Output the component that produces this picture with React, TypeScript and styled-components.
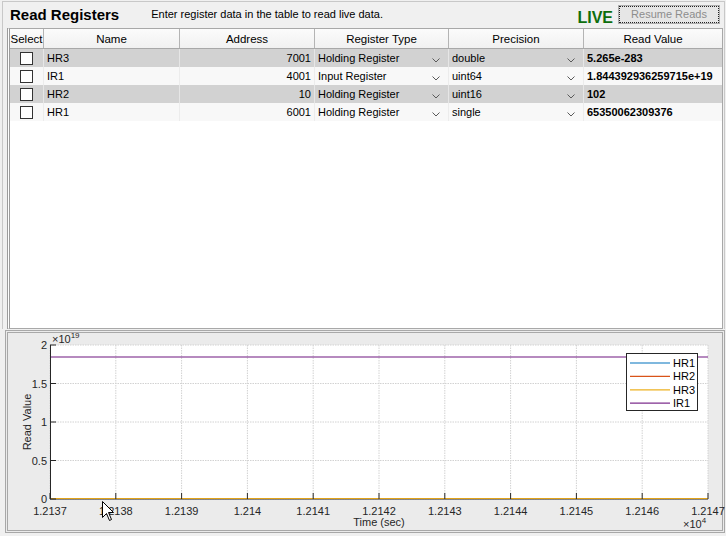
import styled, { createGlobalStyle } from 'styled-components';

const GlobalStyle = createGlobalStyle`
	body {
		margin: 0;
		background: #f0f0f0;
		font-family: "Liberation Sans", Arial, sans-serif;
	}
`;

const Page = styled.div`
	width: 726px;
	height: 536px;
	box-sizing: border-box;
	padding: 1px 1px 3px 2px;
	display: flex;
	flex-direction: column;
	gap: 1px;
`;

const TopPanel = styled.div`
	flex: 0 0 328px;
	box-sizing: border-box;
	border: 1px solid #c8c8c8;
	border-bottom: none;
	display: flex;
	flex-direction: column;
`;

const Header = styled.div`
	height: 26px;
	display: flex;
	align-items: center;
	padding-left: 7px;
	padding-right: 4px;
`;

const Title = styled.div`
	font-size: 15px;
	font-weight: 700;
	color: #000;
	margin-top: -1px;
`;

const Subtitle = styled.div`
	font-size: 11px;
	color: #000;
	margin-left: 32px;
	margin-top: -2px;
`;

const Spacer = styled.div`
	flex: 1;
`;

const Live = styled.div`
	font-size: 16px;
	font-weight: 700;
	color: #0d6e0d;
	align-self: flex-end;
	margin-bottom: 1px;
	margin-right: 5px;
`;

const ResumeButton = styled.button`
	box-sizing: border-box;
	width: 102px;
	height: 19px;
	margin-top: -1px;
	padding: 0;
	display: flex;
	align-items: center;
	justify-content: center;
	font-family: inherit;
	font-size: 11px;
	line-height: 13px;
	color: #8d8d8d;
	background: #e6e6e6;
	border: 1px solid #adadad;
	outline: 1px dotted #222;
	outline-offset: -2px;
`;

const TableFrame = styled.div`
	flex: 1;
	margin: 0 1px 0 4px;
	background: #fff;
	border-left: 3px double #9c9c9c;
	border-top: 1px solid #a8a8a8;
	border-right: 1px solid #a8a8a8;
	border-bottom: 1px solid #a8a8a8;
`;

const columns = '34px 136px 135px 134px 135px 1fr';

const HeadRow = styled.div`
	display: grid;
	grid-template-columns: ${columns};
	height: 19px;
	border-bottom: 1px solid #a8a8a8;
	background: linear-gradient(#fbfbfb, #f1f1f1);
`;

const HeadCell = styled.div`
	display: flex;
	align-items: center;
	justify-content: center;
	font-size: 11.5px;
	color: #000;
	border-right: 1px solid #b4b4b4;
	&:last-child {
		border-right: none;
	}
`;

const Row = styled.div<{ $shade: boolean }>`
	display: grid;
	grid-template-columns: ${columns};
	height: 18px;
	background: ${(p) => (p.$shade ? '#d2d2d2' : '#f8f8f8')};
	--sep: ${(p) => (p.$shade ? '#e6e6e6' : '#ececec')};
`;

const Cell = styled.div<{ $align?: 'left' | 'right' | 'center'; $bold?: boolean }>`
	display: flex;
	align-items: center;
	justify-content: ${(p) =>
		p.$align === 'right' ? 'flex-end' : p.$align === 'center' ? 'center' : 'space-between'};
	padding: 0 3px;
	font-size: 11px;
	font-weight: ${(p) => (p.$bold ? 700 : 400)};
	color: #000;
	border-right: 1px solid var(--sep);
	overflow: hidden;
	white-space: nowrap;
	&:last-child {
		border-right: none;
	}
`;

const DropCell = styled(Cell)`
	padding-right: 8px;
	svg {
		margin-top: 4px;
	}
`;

const Checkbox = styled.div`
	width: 11px;
	height: 11px;
	border: 1px solid #333;
	background: #fff;
`;

const BottomPanel = styled.div`
	flex: 0 0 203px;
	margin-left: 3px;
	box-sizing: border-box;
	border: 3px double #a8a8a8;
	background: #ebebeb;
`;

const Chart = styled.svg`
	display: block;
	overflow: visible;
	font-family: "Liberation Sans", Arial, sans-serif;
`;

const Chevron = () => (
	<svg width="8" height="5" viewBox="0 0 8 5">
		<polyline points="0.5,0.5 4,4 7.5,0.5" fill="none" stroke="#5a5a5a" strokeWidth="1" />
	</svg>
);

interface Register {
	name: string;
	address: string;
	type: string;
	precision: string;
	value: string;
}

const registers: Register[] = [
	{ name: 'HR3', address: '7001', type: 'Holding Register', precision: 'double', value: '5.265e-283' },
	{ name: 'IR1', address: '4001', type: 'Input Register', precision: 'uint64', value: '1.844392936259715e+19' },
	{ name: 'HR2', address: '10', type: 'Holding Register', precision: 'uint16', value: '102' },
	{ name: 'HR1', address: '6001', type: 'Holding Register', precision: 'single', value: '65350062309376' },
];

const heads = ['Select', 'Name', 'Address', 'Register Type', 'Precision', 'Read Value'];

const W = 714;
const H = 197;
const L = 42;
const R = 700;
const T = 12;
const B = 166;
const xTicks = ['1.2137', '1.2138', '1.2139', '1.214', '1.2141', '1.2142', '1.2143', '1.2144', '1.2145', '1.2146', '1.2147'];
const yTicks = ['0', '0.5', '1', '1.5', '2'];

const legend = [
	{ label: 'HR1', color: '#0072bd' },
	{ label: 'HR2', color: '#d95319' },
	{ label: 'HR3', color: '#edb120' },
	{ label: 'IR1', color: '#7e2f8e' },
];

const Plot = () => {
	const dx = (R - L) / (xTicks.length - 1);
	const dy = (B - T) / (yTicks.length - 1);
	const ir1 = B - (1.844392936259715 / 2) * (B - T);
	return (
		<Chart width={W} height={H} viewBox={`0 0 ${W} ${H}`}>
			<rect x={L} y={T} width={R - L} height={B - T} fill="#fff" />
			{xTicks.map((_, i) => (
				<line key={`gx${i}`} x1={L + i * dx} y1={T} x2={L + i * dx} y2={B} stroke="#d2d2d2" strokeDasharray="1.5 1" />
			))}
			{yTicks.map((_, i) => (
				<line key={`gy${i}`} x1={L} y1={B - i * dy} x2={R} y2={B - i * dy} stroke="#d2d2d2" strokeDasharray="1.5 1" />
			))}
			<line x1={L} y1={ir1} x2={R} y2={ir1} stroke="#7e2f8e" strokeWidth="1.6" opacity="0.75" />
			<line x1={L} y1={B - 0.5} x2={R} y2={B - 0.5} stroke="#0072bd" />
			<line x1={L} y1={B - 0.5} x2={R} y2={B - 0.5} stroke="#d95319" />
			<line x1={L} y1={B} x2={R} y2={B} stroke="#262626" />
			<line x1={L} y1={B - 0.5} x2={R} y2={B - 0.5} stroke="#e0a21a" strokeWidth="1.2" />
			<line x1={L + 0.5} y1={T} x2={L + 0.5} y2={B} stroke="#262626" />
			{xTicks.map((t, i) => (
				<g key={`tx${i}`}>
					<line x1={L + i * dx} y1={B} x2={L + i * dx} y2={B - 6} stroke="#262626" />
					<text x={L + i * dx} y={182} fontSize="11" fill="#262626" textAnchor="middle">
						{t}
					</text>
				</g>
			))}
			{yTicks.map((t, i) => (
				<g key={`ty${i}`}>
					<line x1={L} y1={B - i * dy} x2={L + 6} y2={B - i * dy} stroke="#262626" />
					<text x={L - 3} y={B - i * dy + 4} fontSize="11" fill="#262626" textAnchor="end">
						{t}
					</text>
				</g>
			))}
			<text x={L + 2} y={10} fontSize="11" fill="#262626">
				×10
				<tspan fontSize="8" dy="-5">19</tspan>
			</text>
			<text x={675} y={195} fontSize="11" fill="#262626">
				×10
				<tspan fontSize="8" dy="-5">4</tspan>
			</text>
			<text x={371} y={193} fontSize="11" fill="#262626" textAnchor="middle">
				Time (sec)
			</text>
			<text x={23} y={89} fontSize="11" fill="#262626" textAnchor="middle" transform="rotate(-90 23 89)">
				Read Value
			</text>
			<rect x={618.5} y={20.5} width={71} height={57} fill="#fff" stroke="#262626" />
			{legend.map((l, i) => {
				const y = 30 + i * 13.4;
				return (
					<g key={l.label}>
						<line x1={622} y1={y} x2={662} y2={y} stroke={l.color} strokeWidth="1.2" />
						<text x={665} y={y + 4} fontSize="11" fill="#000">
							{l.label}
						</text>
					</g>
				);
			})}
			<path
				d="M94.5 168.5 L94.5 184.5 L98.5 180.5 L101.5 187.5 L103.5 186.5 L100.5 179.5 L105.5 179.5 Z"
				fill="#fff"
				stroke="#000"
				strokeWidth="1"
				strokeLinejoin="round"
			/>
		</Chart>
	);
};

const App = () => {
	return (
		<>
			<GlobalStyle />
			<Page>
				<TopPanel>
					<Header>
						<Title>Read Registers</Title>
						<Subtitle>Enter register data in the table to read live data.</Subtitle>
						<Spacer />
						<Live>LIVE</Live>
						<ResumeButton disabled>Resume Reads</ResumeButton>
					</Header>
					<TableFrame>
						<HeadRow>
							{heads.map((h) => (
								<HeadCell key={h}>{h}</HeadCell>
							))}
						</HeadRow>
						{registers.map((r, i) => (
							<Row key={r.name} $shade={i % 2 === 0}>
								<Cell $align="center">
									<Checkbox />
								</Cell>
								<Cell>{r.name}</Cell>
								<Cell $align="right">{r.address}</Cell>
								<DropCell>
									{r.type}
									<Chevron />
								</DropCell>
								<DropCell>
									{r.precision}
									<Chevron />
								</DropCell>
								<Cell $bold>{r.value}</Cell>
							</Row>
						))}
					</TableFrame>
				</TopPanel>
				<BottomPanel>
					<Plot />
				</BottomPanel>
			</Page>
		</>
	);
};

export default App;
